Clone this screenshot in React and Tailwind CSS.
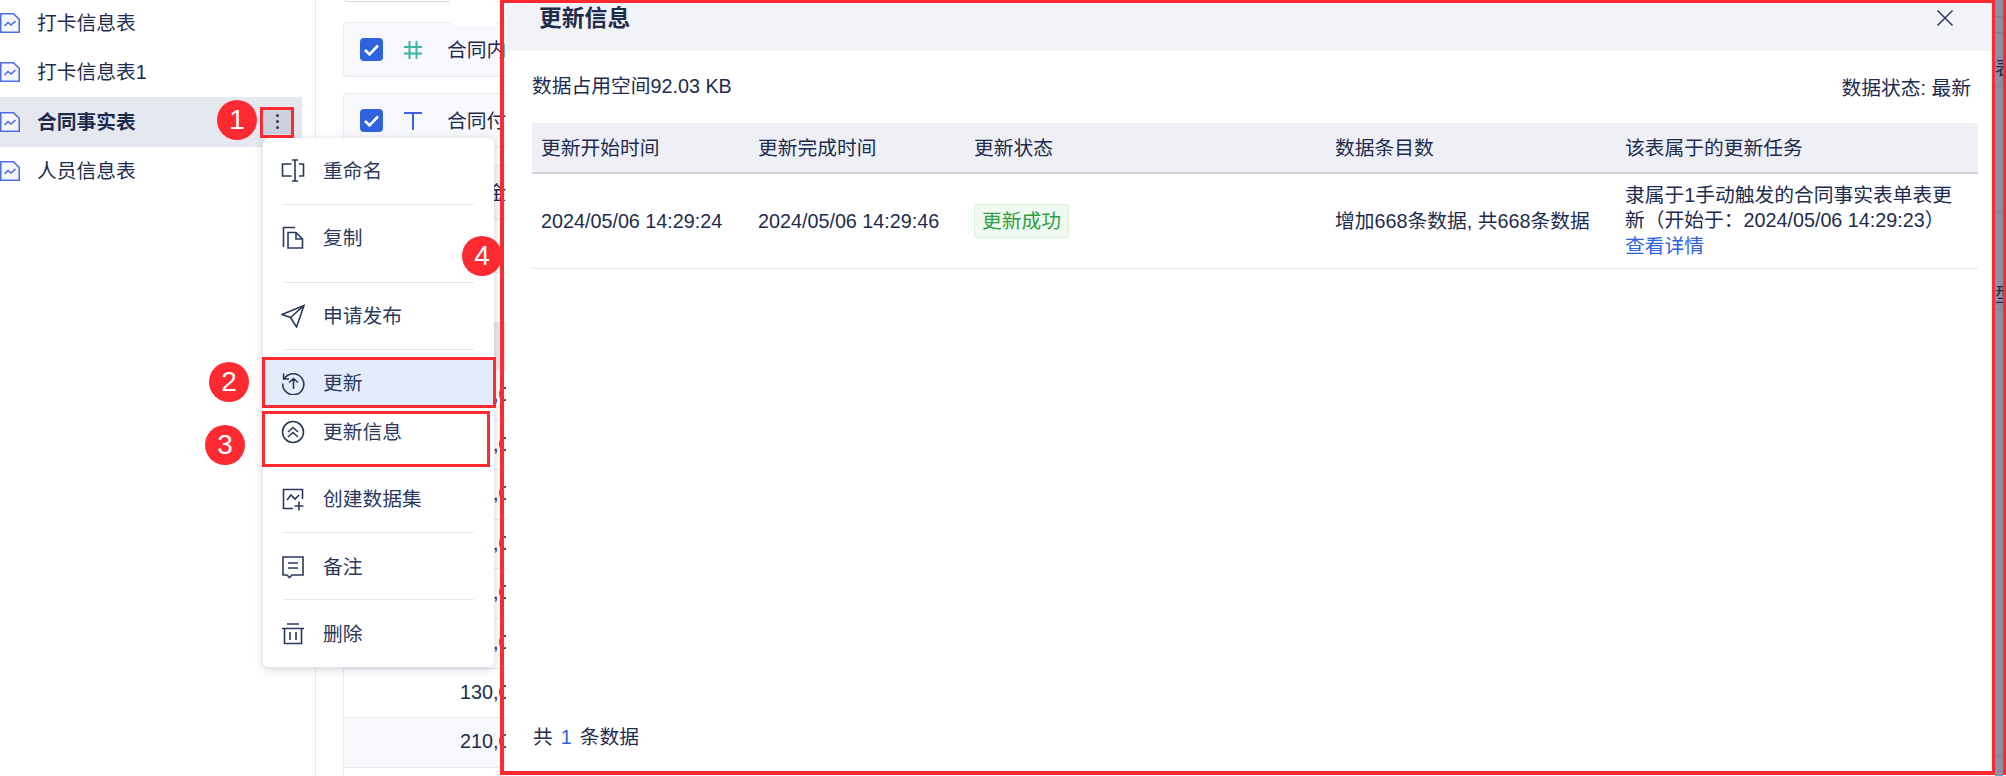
import React from "react";

const FONT = "font-['Liberation_Sans','Noto_Sans_CJK_SC',sans-serif]";

function FileTrend() {
  return (
    <svg width="20" height="20" viewBox="0 0 20 20" fill="none" className="shrink-0">
      <path d="M.75.75H13.5L19.25 6.5V19.25H.75Z" stroke="#4f6fe0" strokeWidth="1.6" fill="#f5f6fe" />
      <path d="M4.5 13L8 9.5L11 12L15.5 8" stroke="#4a6ae6" strokeWidth="1.6" />
    </svg>
  );
}

function Check() {
  return (
    <div className="w-[23px] h-[23px] rounded-[4px] bg-[#2f62dd] flex items-center justify-center shrink-0">
      <svg width="17" height="14" viewBox="0 0 17 14" fill="none">
        <path d="M2 7L6.5 11.5L15 2.5" stroke="#fff" strokeWidth="2.6" />
      </svg>
    </div>
  );
}

function Hash() {
  return (
    <svg width="18" height="18" viewBox="0 0 18 18" fill="none" stroke="#3fb3a6" strokeWidth="2">
      <path d="M0 6H18M0 12.5H18M5.5 0V18M12.5 0V18" />
    </svg>
  );
}

function TIcon() {
  return (
    <svg width="18" height="18" viewBox="0 0 18 18" fill="none" stroke="#3c62dd" strokeWidth="2">
      <path d="M0 1H18M9 1V18" />
    </svg>
  );
}

function MenuIcon({ children }) {
  return (
    <svg width="24" height="24" viewBox="0 0 24 24" fill="none" stroke="#2b3a5c" strokeWidth="1.6" className="shrink-0">
      {children}
    </svg>
  );
}

const icons = {
  rename: (
    <path d="M10.5 5H1.5V17H10.5M14 1V22M11 1H17M11 22H17M18 5H22.5V17H18" />
  ),
  copy: (
    <path d="M7 6.5H15L21.5 13V22H7ZM15 6.5V13H21.5M2.5 21V1.5H14" />
  ),
  send: <path d="M1 10.5L23 1.5L15.5 23L9.5 13.5ZM9.5 13.5L23 1.5" />,
  update: (
    <path d="M3.2 8A10.5 10.5 0 1 1 1.8 12.5M2.6 2.5V8H8M12.5 18V7.5M8 11.5L12.5 7.5L17 11.5" />
  ),
  info: (
    <>
      <circle cx="12" cy="12" r="10.5" />
      <path d="M7 12L12 7.5L17 12M7 17L12 12.5L17 17" />
    </>
  ),
  create: (
    <path d="M12 21.5H2.5V2.5H21.5V12M6 13L10 8L14 12L18 8M18 14.5V23.5M13.5 19H22.5" />
  ),
  remark: <path d="M2 2H22V20H11L8.5 22.5L6 20H2ZM7 8H17M7 13H17" />,
  del: (
    <path d="M1 6.5H23M3.5 6.5V21.5H20.5V6.5M9 10V18M15 10V18M6 2H18" />
  ),
};

function MenuItem({ icon, label, className = "" }) {
  return (
    <div className={`flex items-center pl-[18px] ${className}`}>
      <div className="w-[42px] flex">
        <MenuIcon>{icons[icon]}</MenuIcon>
      </div>
      <span>{label}</span>
    </div>
  );
}

function Divider() {
  return <div className="h-px bg-[#e6e8ef] mx-[20px]" />;
}

function Badge({ n, className }) {
  return (
    <div className={`absolute w-[40px] h-[40px] rounded-full bg-[#fe2a32] text-white text-[28px] flex items-center justify-center ${className}`}>
      {n}
    </div>
  );
}

function FieldCard({ icon, label, className = "mt-[16px]" }) {
  return (
    <div className={`h-[55px] border border-[#e8eaf0] rounded-[4px] bg-[#f7f8fc] flex items-center pl-[16px] whitespace-nowrap ${className}`}>
      <Check />
      <div className="ml-[21px] w-[43px] flex">{icon}</div>
      <span>{label}</span>
    </div>
  );
}

const rowValues = ["380,000", "150,000", "260,000", "190,000", "320,000", "240,000", "130,000", "210,000", "170,000"];
const rowHeights = ["h-[50px]", "h-[49px]", "h-[50px]", "h-[49px]", "h-[50px]", "h-[50px]", "h-[49px]", "h-[50px]", "h-[49px]"];

export default function App() {
  return (
    <div className={`${FONT} relative w-[2006px] h-[776px] overflow-hidden bg-white text-[19.75px] leading-[28px] text-[#1d2c4e]`}>
      <div className="flex h-full">
        {/* Sidebar */}
        <aside className="w-[316px] shrink-0 border-r border-[#e8eaf0] pr-[13px] -mt-[2px]">
          {[
            ["打卡信息表", false],
            ["打卡信息表1", false],
            ["合同事实表", true],
            ["人员信息表", false],
          ].map(([t, active]) => (
            <div key={t} className={`h-[49.5px] flex items-center gap-[17px] ${active ? "bg-[#e5e8ef] font-bold" : ""}`}>
              <FileTrend />
              <span>{t}</span>
              {active && (
                <div className="ml-auto mr-[11px] w-[28px] h-[25px] bg-[#cdd1dd] flex flex-col items-center justify-center gap-[3px]">
                  <i className="w-[3px] h-[3px] rounded-full bg-[#2b3a5c]" />
                  <i className="w-[3px] h-[3px] rounded-full bg-[#2b3a5c]" />
                  <i className="w-[3px] h-[3px] rounded-full bg-[#2b3a5c]" />
                </div>
              )}
            </div>
          ))}
        </aside>

        {/* Main background */}
        <main className="flex-1 overflow-hidden pl-[27px] -mt-[53px] whitespace-nowrap">
          <div className="h-[55px] border border-[#d5d7de] rounded-[4px] bg-white" />
          <FieldCard icon={<Hash />} label="合同内容" className="mt-[20px]" />
          <FieldCard icon={<TIcon />} label="合同付款类型" />
          <FieldCard icon={<Hash />} label="合同金额" className="mt-[17px]" />
          <div className="h-[53px] border-b border-[#e8eaf0]" />
          <div className="h-[49px]" />
          <div className="h-[48px] bg-[#e8eaf2] pl-[60px] flex items-center">合同金额</div>
          <div className="border-l border-[#e8eaf0]">
            {rowValues.map((v, i) => (
              <div
                key={i}
                className={`${rowHeights[i]} pl-[116px] pb-[3px] flex items-center border-t border-[#e8eaf0] ${i === 7 ? "bg-[#f7f8fc]" : "bg-white"}`}
              >
                {v}
              </div>
            ))}
          </div>
        </main>
      </div>

      {/* leftover popup edge */}
      <div className="absolute left-[450px] top-0 w-[47px] h-[26px] bg-white rounded-b-[6px]" />

      {/* Right masked strip */}
      <div className="absolute left-[1995px] top-0 w-[8px] h-[776px] bg-[#8791a3] overflow-hidden text-[#1d2c4e] whitespace-nowrap">
        <div className="h-[17px] border-b border-[#7a8396]" />
        <div className="h-[16px] border-b border-[#7a8396]" />
        <div className="h-[54px] border-b border-[#7a8396] flex items-center pt-[16px]">表</div>
        <div className="h-[126px] border-b border-[#7a8396]" />
        <div className="h-[97px] border-b border-[#7a8396] flex items-end">型</div>
        <div className="h-[446px] border-b border-[#7a8396]" />
      </div>

      {/* Context menu */}
      <div className="absolute left-[263px] top-[138px] w-[231px] h-[529px] bg-white rounded-[6px] shadow-[0_2px_10px_rgba(40,50,80,0.22)] text-[#2b3a5c]">
        <MenuItem icon="rename" label="重命名" className="h-[66px]" />
        <Divider />
        <MenuItem icon="copy" label="复制" className="h-[77px] pb-[12px]" />
        <Divider />
        <MenuItem icon="send" label="申请发布" className="h-[66px]" />
        <Divider />
        <div className="h-[10px]" />
        <MenuItem icon="update" label="更新" className="h-[45px] bg-[#e3ecfb]" />
        <MenuItem icon="info" label="更新信息" className="h-[54px]" />
        <MenuItem icon="create" label="创建数据集" className="h-[73px] pt-[6px]" />
        <Divider />
        <MenuItem icon="remark" label="备注" className="h-[66px] pt-[1px]" />
        <Divider />
        <MenuItem icon="del" label="删除" className="h-[66px] pt-[1px]" />
      </div>

      {/* Drawer */}
      <section className="absolute left-[506px] top-0 w-[1486px] h-[776px] bg-white flex flex-col">
        <header className="h-[51px] bg-[#f2f3f7] flex justify-between pl-[33px] pr-[38px]">
          <h2 className="text-[22.8px] leading-[36px] font-bold text-[#1f2d4d]">更新信息</h2>
          <svg width="18" height="18" viewBox="0 0 18 18" fill="none" stroke="#2b3a5c" strokeWidth="1.5" className="mt-[9px]">
            <path d="M1.5 1.5L16.5 16.5M16.5 1.5L1.5 16.5" />
          </svg>
        </header>
        <div className="h-[72px] flex justify-between pl-[26px] pr-[21px]">
          <span className="mt-[21px]">数据占用空间92.03 KB</span>
          <span className="mt-[23px]">数据状态: 最新</span>
        </div>
        <div className="ml-[26px] w-[1446px]">
          <div className="grid grid-cols-[217px_216px_361px_290px_362px] h-[51px] pt-[1px] bg-[#eef0f5] border-b-2 border-[#d0d2de] items-center">
            {["更新开始时间", "更新完成时间", "更新状态", "数据条目数", "该表属于的更新任务"].map((t) => (
              <div key={t} className="pl-[9px]">{t}</div>
            ))}
          </div>
          <div className="grid grid-cols-[217px_216px_361px_290px_362px] h-[95px] border-b border-[#e8eaf0] items-center">
            <div className="pl-[9px]">2024/05/06 14:29:24</div>
            <div className="pl-[9px]">2024/05/06 14:29:46</div>
            <div className="pl-[9px]">
              <span className="inline-flex h-[34px] items-center px-[7px] bg-[#eff9ef] border border-[#d8f2d8] rounded-[3px] text-[#2f9e44]">更新成功</span>
            </div>
            <div className="pl-[9px]">增加668条数据, 共668条数据</div>
            <div className="pl-[9px] pr-[20px] leading-[25.5px]">
              隶属于1手动触发的合同事实表单表更新（开始于：2024/05/06 14:29:23）
              <div className="text-[#2f62dd]">查看详情</div>
            </div>
          </div>
        </div>
        <div className="mt-auto mb-[25px] pl-[27px]">
          共<span className="mx-2 text-[#2f62dd]">1</span>条数据
        </div>
      </section>

      {/* Annotations */}
      <div className="absolute left-[260px] top-[107px] w-[34px] h-[31px] border-[3px] border-[#fe2a32]" />
      <div className="absolute left-[262px] top-[357px] w-[234px] h-[51px] border-[3px] border-[#fe2a32]" />
      <div className="absolute left-[262px] top-[411px] w-[228px] h-[56px] border-[3px] border-[#fe2a32]" />
      <Badge n="1" className="left-[217px] top-[100px]" />
      <Badge n="2" className="left-[209px] top-[362px]" />
      <Badge n="3" className="left-[205px] top-[425px]" />
      <Badge n="4" className="left-[462px] top-[236px]" />
      <div className="absolute left-[500px] top-0 w-[1495px] h-[775px] border-solid border-[#fe2a32] border-l-[4px] border-t-[3px] border-r-[3px] border-b-[4px]" />
      <div className="absolute left-[2003px] top-0 w-[3px] h-[775px] bg-[#fe2a32]" />
    </div>
  );
}
